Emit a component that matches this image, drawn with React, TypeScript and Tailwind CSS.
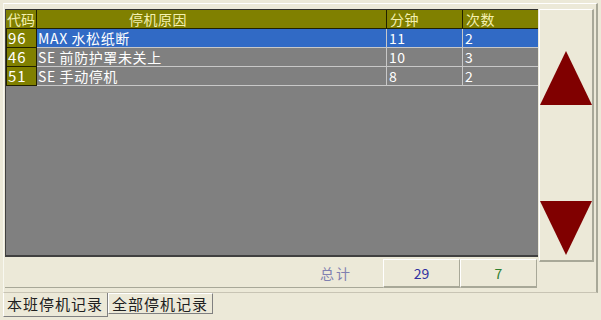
import React from "react";

const rows = [
  { code: "96", reason: "MAX 水松纸断", min: "11", cnt: "2", sel: true },
  { code: "46", reason: "SE 前防护罩未关上", min: "10", cnt: "3", sel: false },
  { code: "51", reason: "SE 手动停机", min: "8", cnt: "2", sel: false },
];

export default function App() {
  return (
    <div
      className="w-[601px] h-[320px] bg-[#ece9d8] overflow-hidden flex flex-col"
      style={{ fontFamily: '"Noto Sans CJK SC", "Liberation Sans", sans-serif' }}
    >
      <div className="h-[3px]" />
      <div className="flex-none h-[290px] mx-[3px] border-t border-t-white border-l border-l-[#f8f8f0] border-r-2 border-r-[#a8a898] border-b border-b-[#c8c4b4] flex flex-col pl-[1px] pt-[5px]">
        <div className="flex">
          {/* grid */}
          <div className="w-[533px] h-[248px] bg-[#808080] flex flex-col border-t border-t-[#303030] border-l border-l-[#404040] border-b-2 border-b-[#404040]">
            <div className="flex h-[19px] bg-[#808000] text-[#f4f0b0] text-[14px] leading-[19px] tracking-[0.5px] border-b border-b-[#202000]">
              <div className="w-[31px] pl-[1px] border-r border-r-[#202000] tracking-[0px]">代码</div>
              <div className="w-[350px] pl-[92px] border-r border-r-[#202000]">停机原因</div>
              <div className="w-[76px] pl-[3px] border-r border-r-[#202000]">分钟</div>
              <div className="flex-1 pl-[3px]">次数</div>
            </div>
            {rows.map((r) => (
              <div key={r.code} className="flex h-[19px] text-white text-[14px] leading-[18px] tracking-[0.6px]">
                <div className="w-[31px] pl-[1px] bg-[#808000] border border-[#202000] border-t-0 text-[15px] tracking-[1px]">{r.code}</div>
                <div className={`flex flex-1 border-b border-b-[#c8c8c8] ${r.sel ? "bg-[#316ac5]" : "bg-[#808080]"}`}>
                  <div className="w-[350px] pl-[1px] border-r border-r-[#c8c8c8] whitespace-nowrap">{r.reason}</div>
                  <div className="w-[76px] pl-[2px] border-r border-r-[#c8c8c8]">{r.min}</div>
                  <div className="flex-1 pl-[2px]">{r.cnt}</div>
                </div>
              </div>
            ))}
          </div>
          {/* right buttons */}
          <div className="w-[55px] h-[253px] ml-[1px] border-t border-t-white border-l border-l-white border-r-2 border-r-[#a8a898] border-b-2 border-b-[#a8a898] flex flex-col items-center justify-between pt-[41px] pb-[5px]">
            <svg width="52" height="54" viewBox="0 0 52 54">
              <polygon points="26,0 52,54 0,54" fill="#800000" />
            </svg>
            <svg width="52" height="54" viewBox="0 0 52 54">
              <polygon points="0,0 52,0 26,54" fill="#800000" />
            </svg>
          </div>
        </div>
        <div className="flex h-[29px] mt-[-3px] text-[14px]">
          <div className="w-[378px] border-b border-b-[#a8a898] flex items-center justify-end pr-[31px] text-[#8080b0] tracking-[2px]">总计</div>
          <div className="w-[77px] border-t border-t-white border-l border-l-white border-r border-r-[#a8a898] border-b-2 border-b-[#a8a898] flex items-center justify-center text-[#3030a0]">29</div>
          <div className="w-[77px] border-t border-t-white border-l border-l-white border-r border-r-[#a8a898] border-b-2 border-b-[#a8a898] flex items-center justify-center text-[#308030]">7</div>
        </div>
      </div>
      <div className="flex h-[24px] ml-[3px] text-[15px] text-[#202020] leading-[22px]">
        <div className="w-[105px] h-[24px] border-l border-l-white border-r border-r-[#808080] border-b border-b-[#808080] pl-[3px] tracking-[1px] whitespace-nowrap">本班停机记录</div>
        <div className="w-[105px] h-[21px] border-t border-t-white border-l border-l-white border-r border-r-[#808080] border-b border-b-[#808080] pl-[3px] leading-[19px] tracking-[1px] whitespace-nowrap">全部停机记录</div>
      </div>
    </div>
  );
}
